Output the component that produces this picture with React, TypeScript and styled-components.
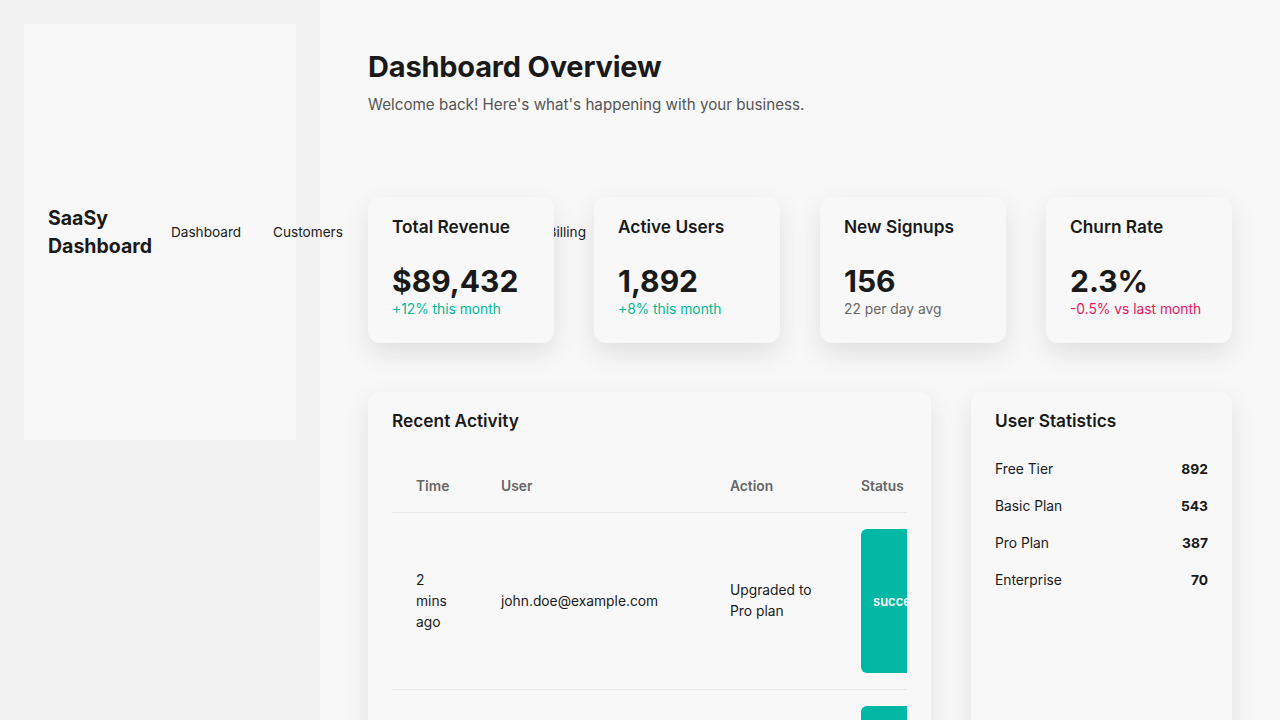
import React from 'react';
import styled, { createGlobalStyle } from 'styled-components';

interface Stat {
  title: string;
  value: string;
  note: string;
  tone: 'up' | 'down' | 'plain';
}

interface Activity {
  time: string;
  user: string;
  action: string;
  status: string;
}

const stats: Stat[] = [
  { title: 'Total Revenue', value: '$89,432', note: '+12% this month', tone: 'up' },
  { title: 'Active Users', value: '1,892', note: '+8% this month', tone: 'up' },
  { title: 'New Signups', value: '156', note: '22 per day avg', tone: 'plain' },
  { title: 'Churn Rate', value: '2.3%', note: '-0.5% vs last month', tone: 'down' },
];

const activities: Activity[] = [
  { time: '2 mins ago', user: 'john.doe@example.com', action: 'Upgraded to Pro plan', status: 'success' },
  { time: '15 mins ago', user: 'jane.smith@example.com', action: 'New signup', status: 'success' },
];

const tiers = [
  { label: 'Free Tier', count: 892 },
  { label: 'Basic Plan', count: 543 },
  { label: 'Pro Plan', count: 387 },
  { label: 'Enterprise', count: 70 },
];

const navItems = ['Dashboard', 'Customers', 'Analytics', 'Reports', 'Billing', 'Settings'];

const noteColors = {
  up: '#00b894',
  down: '#e8175d',
  plain: '#666666',
};

const GlobalStyle = createGlobalStyle`
  html, body {
    margin: 0;
    padding: 0;
    background: #f8f8f8;
    color: #1a1a1a;
    font-family: Inter, "Noto Sans", "Liberation Sans", sans-serif;
  }
  * {
    box-sizing: border-box;
  }
`;

const App: React.FC = () => {
  return (
    <>
      <GlobalStyle />
      <Layout>
        <Sidebar>
          <SidebarCard>
            <Brand>SaaSy Dashboard</Brand>
            <Nav>
              {navItems.map(item => (
                <NavLink key={item}>{item}</NavLink>
              ))}
            </Nav>
          </SidebarCard>
        </Sidebar>
        <Main>
          <Header>
            <PageTitle>Dashboard Overview</PageTitle>
            <Subtitle>Welcome back! Here's what's happening with your business.</Subtitle>
          </Header>
          <StatGrid>
            {stats.map(stat => (
              <StatCard key={stat.title}>
                <StatTitle>{stat.title}</StatTitle>
                <StatValue>{stat.value}</StatValue>
                <StatNote tone={stat.tone}>{stat.note}</StatNote>
              </StatCard>
            ))}
          </StatGrid>
          <Panels>
            <Panel>
              <PanelTitle>Recent Activity</PanelTitle>
              <TableWrap>
                <Table>
                  <colgroup>
                    <col style={{ width: 85 }} />
                    <col style={{ width: 229 }} />
                    <col style={{ width: 131 }} />
                    <col style={{ width: 127 }} />
                  </colgroup>
                  <thead>
                    <tr>
                      <Th>Time</Th>
                      <Th>User</Th>
                      <Th>Action</Th>
                      <Th>Status</Th>
                    </tr>
                  </thead>
                  <tbody>
                    {activities.map(row => (
                      <tr key={row.user}>
                        <Td>{row.time}</Td>
                        <Td>{row.user}</Td>
                        <Td>{row.action}</Td>
                        <Td>
                          <Badge>{row.status}</Badge>
                        </Td>
                      </tr>
                    ))}
                  </tbody>
                </Table>
              </TableWrap>
            </Panel>
            <Panel>
              <PanelTitle>User Statistics</PanelTitle>
              <TierList>
                {tiers.map(tier => (
                  <TierRow key={tier.label}>
                    <span>{tier.label}</span>
                    <TierCount>{tier.count}</TierCount>
                  </TierRow>
                ))}
              </TierList>
            </Panel>
          </Panels>
        </Main>
      </Layout>
    </>
  );
};

export default App;

const Layout = styled.div`
  display: grid;
  grid-template-columns: 320px 1fr;
  min-height: 720px;
`;

const Sidebar = styled.aside`
  background: #f2f2f2;
  padding: 24px;
`;

const SidebarCard = styled.div`
  height: 416px;
  background: #f8f8f8;
  padding: 24px;
  display: flex;
  align-items: center;
  gap: 3px;
`;

const Brand = styled.h1`
  margin: 0;
  font-size: 19.5px;
  font-weight: 700;
  line-height: 28px;
  min-width: min-content;
  width: 0;
`;

const Nav = styled.nav`
  display: flex;
  align-items: center;
  white-space: nowrap;
`;

const NavLink = styled.span`
  padding: 8px 16px;
  font-size: 13.6px;
  color: #1a1a1a;
`;

const Main = styled.main`
  padding: 49px 48px 48px;
  min-width: 0;
`;

const Header = styled.header`
  margin-bottom: 80px;
`;

const PageTitle = styled.h2`
  margin: 0 0 8px;
  font-size: 29px;
  line-height: 36px;
  font-weight: 700;
  letter-spacing: -0.2px;
`;

const Subtitle = styled.p`
  margin: 0;
  font-size: 15.2px;
  line-height: 24px;
  color: #555555;
`;

const StatGrid = styled.div`
  display: grid;
  grid-template-columns: repeat(4, 1fr);
  gap: 40px;
  margin-bottom: 49px;
`;

const StatCard = styled.div`
  position: relative;
  background: #f8f8f8;
  border-radius: 12px;
  padding: 19px 24px 24px;
  box-shadow: 0 10px 26px rgba(0, 0, 0, 0.1);
`;

const StatTitle = styled.h3`
  margin: 0 0 26px;
  font-size: 17.3px;
  line-height: 22px;
  font-weight: 600;
`;

const StatValue = styled.div`
  font-size: 30px;
  line-height: 35px;
  font-weight: 700;
`;

const StatNote = styled.div<{ tone: Stat['tone'] }>`
  font-size: 13.8px;
  line-height: 20px;
  color: ${p => noteColors[p.tone]};
`;

const Panels = styled.div`
  display: grid;
  grid-template-columns: 563px 1fr;
  gap: 40px;
`;

const Panel = styled.section`
  position: relative;
  background: #f8f8f8;
  border-radius: 12px;
  padding: 18px 24px 24px;
  box-shadow: 0 10px 26px rgba(0, 0, 0, 0.1);
  min-height: 400px;
`;

const PanelTitle = styled.h3`
  margin: 0 0 19px;
  font-size: 17.3px;
  line-height: 22px;
  font-weight: 600;
`;

const TableWrap = styled.div`
  overflow: hidden;
  padding-top: 10px;
`;

const Table = styled.table`
  table-layout: fixed;
  width: 572px;
  border-collapse: collapse;
  font-size: 13.8px;
`;

const Th = styled.th`
  text-align: left;
  padding: 16px 24px;
  line-height: 19px;
  font-weight: 600;
  color: #666666;
  border-bottom: 1px solid #e8e8e8;
`;

const Td = styled.td`
  padding: 16px 24px;
  line-height: 21px;
  color: #1a1a1a;
  border-bottom: 1px solid #e8e8e8;
  vertical-align: middle;
`;

const Badge = styled.span`
  display: flex;
  align-items: center;
  height: 144px;
  padding: 0 12px;
  border-radius: 6px;
  background: #00b8a3;
  color: #ffffff;
  font-size: 13px;
  font-weight: 600;
`;

const TierList = styled.div`
  display: flex;
  flex-direction: column;
`;

const TierRow = styled.div`
  display: flex;
  justify-content: space-between;
  padding: 8px 0;
  font-size: 13.8px;
  line-height: 21px;
`;

const TierCount = styled.span`
  font-weight: 700;
`;
